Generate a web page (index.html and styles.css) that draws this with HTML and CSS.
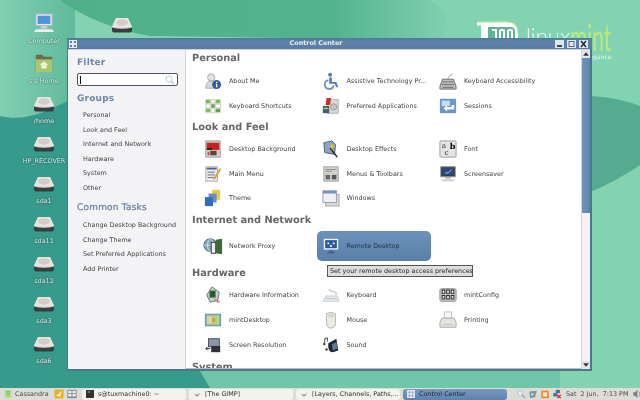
FILE: index.html
```html
<!DOCTYPE html>
<html lang="en">
<head>
<meta charset="utf-8">
<title>Control Center</title>
<link rel="stylesheet" href="styles.css">
</head>
<body>
<svg width="0" height="0" class="defs">
  <defs>
    <symbol id="drive" viewBox="0 0 22 20">
      <path d="M5 4h12l4 9v3q0 2-2 2H3q-2 0-2-2v-3z" fill="#dcd9d4"/>
      <path d="M5 4h12l4 9H1z" fill="#e9e5e0"/>
      <ellipse cx="11" cy="8.500" rx="6" ry="3.200" fill="#d4ccc8"/>
      <path d="M1 13.500q10 2.500 20 0v3q0 2-2 2H3q-2 0-2-2z" fill="#33403f"/>
    </symbol>
  </defs>
</svg>
<main class="desktop">
  <svg class="wallpaper" viewBox="0 0 640 400" preserveAspectRatio="none" aria-hidden="true">
    <defs>
      <linearGradient id="wallA" x1="0" y1="0" x2="1" y2="0"><stop offset="0" stop-color="#82d0b4"/><stop offset="1" stop-color="#5fb99a"/></linearGradient>
      <linearGradient id="wallB" x1="0" y1="0" x2="1" y2="0"><stop offset="0" stop-color="#4fb089"/><stop offset=".7" stop-color="#53b38e"/><stop offset="1" stop-color="#80d0b0"/></linearGradient>
      <linearGradient id="wallC" x1="0" y1="0" x2="1" y2="0"><stop offset="0" stop-color="#369a8c"/><stop offset="1" stop-color="#379b8b"/></linearGradient>
    </defs>
    <rect width="640" height="400" fill="#83d3b3"/>
    <rect width="75" height="140" fill="url(#wallA)"/>
    <path d="M60 0C85 18 115 30 150 36L440 40C455 25 445 10 430 0z" fill="url(#wallB)"/>
    <path d="M0 116C25 122 45 112 70 100L70 371H200L215 388H0z" fill="url(#wallC)"/>
    <path d="M200 371H560V388H210z" fill="#6fc6a9"/>
    <path d="M590 96C610 97 628 101 640 106V165C625 175 610 184 590 192z" fill="#55ab8f"/>
  </svg>
  <div class="logo" aria-hidden="true">
    <svg class="logo-mark" viewBox="0 0 50 20">
      <path d="M1 3h30q11 0 11 11v6H5V6.500H1z" fill="#fff"/>
      <path d="M12 8h24q3 1 3 5v7H12z" fill="#5fb492"/>
      <path d="M16 10h5v10h-2V12h-3zM23 11q4-2 6 0v9h-2v-8h-2v8h-2zM31 11q4-2 6 0v9h-2v-8h-2v8h-2z" fill="#fff"/>
      <path d="M1 3h30q11 0 11 11" fill="none" stroke="#bfe98c"/>
    </svg>
    <span class="logo-linux">linux</span>
    <span class="logo-mint">mint</span>
    <span class="logo-tag">elegance</span>
  </div>
  <div class="desk-column">
    <div class="desk-icon">
      <svg class="desk-glyph" viewBox="0 0 24 22">
        <rect x="3" y="1" width="18" height="13" fill="#e3e8ee" stroke="#9fb0c0"/>
        <rect x="5" y="3" width="14" height="9" fill="#4f94d8"/>
        <path d="M9 14h6l1 3H8z" fill="#c9ced2"/>
        <path d="M3 18h18l2 3H1z" fill="#eceeed"/>
      </svg>
      <span>Computer</span>
    </div>
    <div class="desk-icon">
      <svg class="desk-glyph" viewBox="0 0 24 22">
        <path d="M3 2h7l2 2h9v17H3z" fill="#6d6a58"/>
        <rect x="3" y="7" width="18" height="14" fill="#a6c76a"/>
        <path d="M12 9l5 4h-2v4H9v-4H7z" fill="#eef0dc"/>
      </svg>
      <span>s's Home</span>
    </div>
    <div class="desk-icon"><svg class="desk-glyph"><use href="#drive"/></svg><span>/home</span></div>
    <div class="desk-icon"><svg class="desk-glyph"><use href="#drive"/></svg><span>HP_RECOVER</span></div>
    <div class="desk-icon"><svg class="desk-glyph"><use href="#drive"/></svg><span>sda1</span></div>
    <div class="desk-icon"><svg class="desk-glyph"><use href="#drive"/></svg><span>sda11</span></div>
    <div class="desk-icon"><svg class="desk-glyph"><use href="#drive"/></svg><span>sda12</span></div>
    <div class="desk-icon"><svg class="desk-glyph"><use href="#drive"/></svg><span>sda3</span></div>
    <div class="desk-icon"><svg class="desk-glyph"><use href="#drive"/></svg><span>sda6</span></div>
  </div>
  <svg class="desk-glyph desk-loose"><use href="#drive"/></svg>

  <section class="window">
    <header class="titlebar">
      <svg class="win-menu" viewBox="0 0 8 8"><rect width="8" height="8" fill="#e8ecf2"/><path d="M1 1h2v2H1zM5 1h2v2H5zM1 5h2v2H1zM5 5h2v2H5z" fill="#5d7ea8"/></svg>
      <h1 class="win-title">Control Center</h1>
      <div class="win-buttons">
        <span class="win-btn"><svg viewBox="0 0 9 8"><rect x="2" y="5" width="5" height="2" fill="#3c4a5a"/></svg></span>
        <span class="win-btn"><svg viewBox="0 0 9 8"><rect x="2" y="1.500" width="5" height="5" fill="none" stroke="#5a6c80"/></svg></span>
        <span class="win-btn"><svg viewBox="0 0 9 8"><path d="M2 1l5 6M7 1L2 7" stroke="#1e2830" stroke-width="1.500"/></svg></span>
      </div>
    </header>
    <div class="win-body">
      <aside class="sidebar">
        <h2 class="side-head">Filter</h2>
        <div class="search">
          <span class="caret"></span>
          <svg class="search-glass" viewBox="0 0 12 10"><circle cx="5" cy="4" r="3" fill="none" stroke="#c8ccd0"/><path d="M7 6l3 3" stroke="#c8ccd0" stroke-width="1.500"/></svg>
        </div>
        <h2 class="side-head">Groups</h2>
        <ul class="side-list">
          <li>Personal</li><li>Look and Feel</li><li>Internet and Network</li><li>Hardware</li><li>System</li><li>Other</li>
        </ul>
        <h2 class="side-head side-head-tasks">Common Tasks</h2>
        <ul class="side-list">
          <li>Change Desktop Background</li><li>Change Theme</li><li>Set Preferred Applications</li><li>Add Printer</li>
        </ul>
      </aside>
      <div class="content">
        <h2 class="group-head">Personal</h2>
        <div class="grid">
          <div class="item"><svg viewBox="0 0 20 20"><circle cx="8" cy="6" r="4" fill="#e2e2e6" stroke="#a8a8b0"/><path d="M2 18q0-8 6-8t6 8z" fill="#d8d8dc" stroke="#a8a8b0"/><circle cx="14" cy="14" r="5" fill="#2a5fa5"/><rect x="13.300" y="13" width="1.500" height="4" fill="#fff"/><rect x="13.300" y="10.800" width="1.500" height="1.500" fill="#fff"/></svg><span>About Me</span></div>
          <div class="item"><svg viewBox="0 0 20 20"><circle cx="9" cy="3" r="2.200" fill="#4f7fb5"/><path d="M8 6h3v5h5l2 6h-2l-2-4H8z" fill="#4f7fb5"/><path d="M7 9a5 5 0 1 0 6 6" fill="none" stroke="#6e95c2" stroke-width="2"/></svg><span>Assistive Technology Pr...</span></div>
          <div class="item"><svg viewBox="0 0 20 20"><path d="M4 8h12l3 8v3H1v-3z" fill="#bdbdbd" stroke="#666"/><path d="M4 11h12M3 14h14M4 17h12" stroke="#6a6a6a"/><path d="M10 8q0-4 5-5" fill="none" stroke="#999"/></svg><span>Keyboard Accessibility</span></div>
          <div class="item"><svg viewBox="0 0 20 20"><rect x="1" y="2" width="18" height="16" fill="#e4eee0"/><path d="M2 3h5v4H2zM13 3h5v4h-5zM2 13h5v4H2z" fill="#7dba5a"/><path d="M8 3h4v4H8zM2 8h5v4H2zM13 8h5v4h-5zM8 13h4v4H8z" fill="#fff" stroke="#9aa9a0" stroke-width=".5"/><path d="M8 8h4v4H8zM13 13h5v4h-5z" fill="#6ca44c"/></svg><span>Keyboard Shortcuts</span></div>
          <div class="item"><svg viewBox="0 0 20 20"><rect x="6" y="3" width="12" height="15" fill="#dcd9d8" stroke="#aaa"/><circle cx="13" cy="11" r="3.500" fill="#c8c4c4" stroke="#999"/><path d="M5 1h5l-1 8H4z" fill="#c6332c"/><rect x="1" y="10" width="7" height="8" fill="#3f5f80"/><rect x="2" y="12" width="5" height="1.500" fill="#e8c040"/></svg><span>Preferred Applications</span></div>
          <div class="item"><svg viewBox="0 0 20 20"><rect x="1" y="2" width="18" height="16" rx="1" fill="#6c98c6"/><rect x="3" y="4" width="9" height="6" fill="#c8dcf0"/><path d="M17 9v5H9v2l-4-3.500L9 9v2h5V9z" fill="#f2f5fa"/></svg><span>Sessions</span></div>
        </div>
        <h2 class="group-head">Look and Feel</h2>
        <div class="grid">
          <div class="item"><svg viewBox="0 0 20 20"><rect x="2" y="1" width="16" height="18" fill="#d8d0c8" stroke="#a09890"/><rect x="3" y="3" width="14" height="8" fill="#c02226"/><path d="M3 9h6v2H3z" fill="#2a2020"/><rect x="7" y="12" width="7" height="5" fill="#5a4640"/><rect x="4" y="13" width="2" height="4" fill="#b85040"/></svg><span>Desktop Background</span></div>
          <div class="item"><svg viewBox="0 0 20 20"><path d="M2 3l9-2 4 4-1 11-11-2z" fill="#8aa4c4" stroke="#4a5c70"/><path d="M9 9l8 10" stroke="#222" stroke-width="1.600"/><path d="M11 3l1 3 3 1-3 1-1 3-1-3-3-1 3-1z" fill="#f0c020"/></svg><span>Desktop Effects</span></div>
          <div class="item font-tile"><svg viewBox="0 0 20 20"><rect x="1" y="1" width="18" height="18" rx="1" fill="#e4e4e4" stroke="#999"/><text x="3" y="9" font-size="8" fill="#222">a</text><text x="12" y="10" font-size="9" font-weight="700" fill="#000">b</text><text x="6" y="17" font-size="8" fill="#222">c</text></svg><span>Font</span></div>
          <div class="item"><svg viewBox="0 0 20 20"><rect x="2" y="2" width="13" height="16" fill="#eeeae4" stroke="#aaa"/><path d="M3 3h11v2H3z" fill="#3a68a8"/><path d="M4 8h8M4 11h8M4 14h8" stroke="#5a6a80"/><path d="M18 3L11 14l-1 3 3-2L19 5z" fill="#d8a038"/></svg><span>Main Menu</span></div>
          <div class="item"><svg viewBox="0 0 20 20"><rect x="2" y="2" width="16" height="16" fill="#d2d2cc" stroke="#a0a09a"/><path d="M4 5h12M4 7h7" stroke="#888"/><rect x="4" y="11" width="5" height="5" fill="#667"/><rect x="11" y="11" width="5" height="5" fill="#556"/></svg><span>Menus &amp; Toolbars</span></div>
          <div class="item"><svg viewBox="0 0 20 20"><rect x="2" y="2" width="16" height="11" fill="#34393f" stroke="#888"/><rect x="3.500" y="3.500" width="13" height="8" fill="#2a4a80"/><path d="M7 9q4 1 7-4" stroke="#bcd" fill="none"/><path d="M7 13h6v2H7z" fill="#aaa"/><path d="M3 16h14v2H3z" fill="#ccc"/></svg><span>Screensaver</span></div>
          <div class="item"><svg viewBox="0 0 20 20"><rect x="9" y="1" width="9" height="11" fill="#e8c84c"/><rect x="5" y="5" width="9" height="10" fill="#6f8db8"/><rect x="1" y="9" width="9" height="10" fill="#2f6fc0"/></svg><span>Theme</span></div>
          <div class="item"><svg viewBox="0 0 20 20"><rect x="4" y="6" width="15" height="13" fill="#d8d8d4" stroke="#aaa"/><rect x="1" y="2" width="15" height="13" fill="#eef0f2" stroke="#99a"/><rect x="1" y="2" width="15" height="3" fill="#7094c0"/></svg><span>Windows</span></div>
        </div>
        <h2 class="group-head group-head-wide">Internet and Network</h2>
        <div class="grid grid-wide">
          <div class="item item-proxy"><svg viewBox="0 0 22 20"><circle cx="8" cy="9" r="7" fill="#82a8c0" stroke="#38586c"/><ellipse cx="8" cy="9" rx="3" ry="7" fill="none" stroke="#d0e0ea"/><path d="M1 9h14" stroke="#d0e0ea"/><rect x="9" y="6" width="5" height="12" fill="#eee" stroke="#333"/><path d="M14 3l7-1v17l-7-1z" fill="#3e6838"/></svg><span>Network Proxy</span></div>
          <div class="item item-active"><svg viewBox="0 0 20 20"><rect x="2" y="2" width="16" height="12" fill="#f0f4f8"/><rect x="3.500" y="3.500" width="13" height="9" fill="#2d5a94"/><path d="M6 6h2v2H6zM12 6h2v2h-2zM9 9h2v2H9z" fill="#e6eef6"/><path d="M8 15h4v1H8zM6 17h8v1H6z" fill="#3a5470"/></svg><span>Remote Desktop</span></div>
        </div>
        <h2 class="group-head">Hardware</h2>
        <div class="grid grid-hw">
          <div class="item"><svg viewBox="0 0 20 20"><path d="M9 1l8 6-2 9-8 2-4-8z" fill="#c8d0c8" stroke="#667"/><rect x="6" y="5" width="7" height="8" fill="#3a7a3a"/><path d="M7 7h5M7 9h5M7 11h5" stroke="#1a3a1a"/><path d="M12 14l6 3-2 2-5-3z" fill="#c88a8a"/></svg><span>Hardware Information</span></div>
          <div class="item"><svg viewBox="0 0 20 20"><path d="M4 11h13l2 6H1z" fill="#e4e8e4" stroke="#ccd"/><path d="M4 14h12" stroke="#bcc"/><path d="M15 10q3-3-3-4T9 3" fill="none" stroke="#aab" /></svg><span>Keyboard</span></div>
          <div class="item"><svg viewBox="0 0 20 20"><rect x="1" y="3" width="18" height="14" rx="2" fill="#c8c8c4" stroke="#888"/><path d="M3 4h4v5H3zM8 4h4v5H8zM13 4h4v5h-4zM3 10h4v5H3zM8 10h4v5H8zM13 10h4v5h-4z" fill="#2a2a2a"/><path d="M4 5h2v3H4zM9 5h2v3H9zM14 5h2v3h-2zM4 11h2v3H4zM9 11h2v3H9zM14 11h2v3h-2z" fill="#ddd"/></svg><span>mintConfig</span></div>
          <div class="item"><svg viewBox="0 0 20 20"><rect x="1" y="3" width="18" height="14" fill="#6e9eb0"/><rect x="3" y="5" width="14" height="10" fill="#dcd8a4"/><path d="M9 5h8v10H9z" fill="#b8cf88"/><path d="M9 7l5 3-5 3z" fill="#d8a020"/></svg><span>mintDesktop</span></div>
          <div class="item"><svg viewBox="0 0 20 20"><path d="M5 3q5-3 10 0v10q0 6-5 6t-5-6z" fill="#ecebe6" stroke="#b4b4ae"/><path d="M7 3h6v4H7z" fill="#d6d6d0"/></svg><span>Mouse</span></div>
          <div class="item"><svg viewBox="0 0 20 20"><path d="M6 1h8v7H6z" fill="#f6f6f4" stroke="#bbb"/><path d="M3 8h14l2 5v5H1v-5z" fill="#e4e4e0" stroke="#a8a8a4"/><rect x="5" y="14" width="10" height="2" fill="#ccc"/></svg><span>Printing</span></div>
          <div class="item"><svg viewBox="0 0 20 20"><rect x="5" y="3" width="12" height="9" fill="#8a96a4" stroke="#445"/><rect x="8" y="11" width="10" height="7" fill="#2e3236"/><path d="M2 14h5M4 12l-2 2 2 2" stroke="#222" fill="none"/></svg><span>Screen Resolution</span></div>
          <div class="item"><svg viewBox="0 0 20 20"><path d="M7 8l9-5 2 13-6 2q-6 0-5-10z" fill="#1e2630"/><path d="M11 9l5-2 1 7-5 2z" fill="#5a7aa0"/><path d="M3 3v5M6 2v4M3 3l3-1" stroke="#333" fill="none"/><circle cx="2.500" cy="9" r="1.300" fill="#333"/><circle cx="5" cy="15" r="1.300" fill="#333"/></svg><span>Sound</span></div>
        </div>
        <h2 class="group-head">System</h2>
        <div class="tooltip">Set your remote desktop access preferences</div>
      </div>
      <div class="scrollbar">
        <span class="scroll-btn"><svg viewBox="0 0 7 7"><path d="M3.500 2L6 5H1z" fill="#333"/></svg></span>
        <span class="scroll-thumb"></span>
        <span class="scroll-rest"></span>
        <span class="scroll-btn"><svg viewBox="0 0 7 7"><path d="M3.500 5L6 2H1z" fill="#333"/></svg></span>
      </div>
    </div>
  </section>

  <footer class="panel">
    <div class="launchers">
      <svg class="pi" viewBox="0 0 10 12"><rect x="1" y="1" width="8" height="10" fill="#b8dc88"/><path d="M3 3h4M3 5h4M3 7h4" stroke="#7db050"/></svg>
      <span class="menu-label">Cassandra</span>
      <svg class="pi pi-wide" viewBox="0 0 11 12"><rect width="11" height="11" y=".5" rx="1" fill="#e8b030"/><path d="M2 8l7-6-2 7z" fill="#fff3b0"/></svg>
      <svg class="pi pi-wide" viewBox="0 0 11 12"><rect width="11" height="10" y="1" fill="#7b8a90"/><path d="M1 2h4v3H1zM6 2h4v3H6zM1 6h4v3H1zM6 6h4v3H6z" fill="#e6ece8"/></svg>
    </div>
    <div class="tasks">
      <div class="task"><svg class="pi" viewBox="0 0 10 12"><rect y="1" width="10" height="10" fill="#2e3234"/><rect x="2" y="3" width="3" height="1" fill="#ccc"/></svg><span>s@tuxmachine0: ~</span></div>
      <div class="task"><svg class="pi" viewBox="0 0 10 12"><path d="M1 5q4 4 8-1-2 6-5 5z" fill="#9a9a90"/></svg><span>[The GIMP]</span></div>
      <div class="task"><svg class="pi" viewBox="0 0 10 12"><path d="M1 5q4 4 8-1-2 6-5 5z" fill="#9a9a90"/></svg><span>[Layers, Channels, Paths,...</span></div>
      <div class="task task-active"><svg class="pi" viewBox="0 0 10 12"><rect y="1" width="10" height="10" fill="#dfe6ef"/><path d="M2 3h2v2H2zM6 3h2v2H6zM2 7h2v2H2zM6 7h2v2H6z" fill="#7a96bc"/></svg><span>Control Center</span></div>
    </div>
    <div class="tray">
      <svg class="pi pi-wide" viewBox="0 0 11 12"><circle cx="4.500" cy="5" r="3" fill="#e4eef4" stroke="#a8c0d0"/><path d="M7 7l3 4" stroke="#90a4b0" stroke-width="1.500"/></svg>
      <svg class="pi pi-wide" viewBox="0 0 11 12"><path d="M1 3l9-1-2 8-6 1z" fill="#7c98a8"/><path d="M3 5l4 1-3 2z" fill="#eef"/></svg>
      <svg class="pi pi-wide" viewBox="0 0 11 12"><rect x="1" y="2" width="9" height="9" fill="#ef8a2a"/><rect x="3" y="4" width="5" height="5" fill="#fbe7c8"/></svg>
      <svg class="pi pi-wide" viewBox="0 0 11 12"><rect x="1" y="5" width="5" height="4" fill="#4a6e98"/><rect x="4" y="1" width="5" height="4" fill="#4a6e98"/><path d="M6 7l4 4M10 7l-4 4" stroke="#d02020" stroke-width="1.500"/></svg>
      <span class="clock">Sat&nbsp; 2 Jun,&nbsp; 7:13 PM</span>
      <svg class="pi pi-wide" viewBox="0 0 11 12"><path d="M1 4h2l3-3v10L3 8H1z" fill="#7a8088"/><path d="M8 3q2 3 0 6" fill="none" stroke="#8a9098"/></svg>
    </div>
  </footer>
</main>
</body>
</html>
```
FILE: styles.css
```css
* { box-sizing: border-box; }
html, body { margin: 0; padding: 0; }
body { width: 640px; height: 400px; overflow: hidden; font-family: "DejaVu Sans", sans-serif; text-rendering: geometricPrecision; }
h1, h2, ul { margin: 0; padding: 0; font-weight: normal; }
ul { list-style: none; }
.defs { position: absolute; }

.desktop { position: relative; width: 640px; height: 400px; overflow: hidden; background: #83d3b3; filter: blur(.3px); }
.wallpaper { position: absolute; inset: 0; width: 640px; height: 400px; }

.logo { position: absolute; left: 0; top: 0; width: 640px; height: 70px; }
.logo-mark { position: absolute; left: 476px; top: 19px; width: 50px; height: 20px; }
.logo-linux { position: absolute; left: 526px; top: 26px; font: 300 22px/20px Lato, sans-serif; color: #f2faf6; }
.logo-mint { position: absolute; left: 570px; top: 24px; font: 400 38px/26px Lato, sans-serif; color: #b8ea7c; transform: scaleX(.55); transform-origin: left; }
.logo-tag { position: absolute; left: 584px; top: 54px; font-size: 6px; line-height: 8px; color: #e6f6ee; }

.desk-column { position: absolute; left: 22px; top: 13px; width: 44px; display: flex; flex-direction: column; }
.desk-icon { height: 40px; display: flex; flex-direction: column; align-items: center; color: #dcebe6; font-size: 6.400px; line-height: 9px; white-space: nowrap; text-shadow: 0 0 2px #234; }
.desk-glyph { width: 22px; height: 20px; display: block; flex: none; margin-bottom: 4px; }
.desk-loose { position: absolute; left: 111px; top: 14px; }

.window { position: absolute; left: 67px; top: 38px; width: 525px; height: 333px; display: flex; flex-direction: column; background: #4c7590; padding: 0 2px 2px 1px; }
.titlebar { height: 11px; margin: 0 -2px 0 -1px; display: flex; align-items: center; padding: 0 4px 0 2px; background: linear-gradient(#4f7a8e, #5f82ab 30%, #5b7ba6); flex: none; }
.win-menu { width: 8px; height: 8px; flex: none; }
.win-title { flex: 1; text-align: center; font-size: 6.400px; font-weight: 700; line-height: 11px; color: #e8eef6; }
.win-buttons { display: flex; gap: 3px; }
.win-btn { width: 9px; height: 8px; background: #dfe6ee; display: block; }
.win-btn svg { display: block; width: 9px; height: 8px; }

.win-body { flex: 1; min-height: 0; display: flex; background: #fff; border-top: 1px solid #c8d2e0; }
.sidebar { width: 118px; flex: none; background: #f4f3f6; border-right: 1px solid #cfd2d8; padding: 8px 8px 0 9px; }
.side-head { font-size: 9px; line-height: 11px; font-weight: 700; color: #6d8aa8; letter-spacing: .2px; }
.side-head-tasks { margin-top: 8px; font-weight: 400; color: #5f7ea2; -webkit-text-stroke: .2px #5f7ea2; }
.search { position: relative; height: 13px; width: 101px; margin: 4px 0 8px; background: #fff; border: 1px solid #4b5560; border-radius: 2px; }
.caret { position: absolute; left: 2px; top: 2px; width: 1px; height: 8px; background: #111; }
.search-glass { position: absolute; right: 1px; top: 1px; width: 12px; height: 10px; }
.side-list { margin: 3px 0 0 6px; }
.side-head-tasks + .side-list { margin-top: 4px; }
.side-list li { font-size: 6.400px; line-height: 14.500px; color: #444; white-space: nowrap; }

.content { flex: 1; min-width: 0; position: relative; overflow: hidden; background: #fff; padding: 2px 0 0 6px; border-bottom: 1px solid #b8bec6; }
.group-head { font-size: 9.800px; line-height: 14px; font-weight: 700; color: #66666a; margin: 3px 0 2px; white-space: nowrap; }
.content > .group-head:first-child { margin: 0 0 3px; }
.group-head-wide { margin-bottom: 3px; }
.grid { display: grid; grid-template-columns: 117.500px 117.500px 117.500px; grid-auto-rows: 24.500px; padding-left: 7px; }
.grid-wide { grid-auto-rows: 30px; margin-bottom: 6px; }
.grid-hw { grid-auto-rows: 25px; }
.item { display: flex; align-items: center; gap: 7px; padding-left: 5px; font-size: 6.400px; color: #444; white-space: nowrap; }
.item svg { width: 18px; height: 18px; flex: none; font-family: "DejaVu Serif", serif; }
.item-proxy { padding-left: 4px; gap: 6px; }
.item-proxy svg { width: 20px; height: 20px; }
.item-active { background: linear-gradient(#6d92ba, #6288b2 50%, #5a80aa); border-radius: 5px; width: 114px; color: #1f2f42; }

.tooltip { position: absolute; left: 141px; top: 215px; width: 146px; height: 12px; background: #dedede; border: 1px solid #555; font-size: 6.400px; line-height: 10px; padding-left: 2px; color: #262626; white-space: nowrap; }

.scrollbar { width: 9px; flex: none; display: flex; flex-direction: column; background: #f5eff6; border-left: 1px solid #d7d7de; }
.scroll-btn { height: 8px; background: #e6e6ea; flex: none; display: block; }
.scroll-btn svg { display: block; width: 8px; height: 8px; }
.scroll-thumb { height: 155px; flex: none; background: linear-gradient(90deg, #6f94bb, #5f84ae); display: block; }
.scroll-rest { flex: 1; display: block; }

.panel { position: absolute; left: 0; right: 0; bottom: 0; height: 12px; background: #dedcd6; display: flex; align-items: center; font-size: 6.400px; color: #303030; white-space: nowrap; }
.pi { width: 8px; height: 10px; flex: none; }
.pi-wide { width: 10px; }
.launchers { width: 82px; flex: none; padding-left: 4px; display: flex; align-items: center; gap: 3px; }
.menu-label { width: 35px; margin-right: 1px; color: #44524a; }
.tasks { width: 428px; flex: none; display: flex; gap: 3px; }
.task { width: 104px; height: 11px; background: #f3f3ee; border-radius: 3px; display: flex; align-items: center; gap: 4px; padding-left: 4px; overflow: hidden; }
.task-active { background: linear-gradient(#7898bf, #5f82ad); color: #162434; }
.tray { flex: 1; display: flex; align-items: center; gap: 2px; padding-left: 6px; }
.clock { margin: 0 4px 0 2px; color: #4e4e4a; width: 60px; }
```
